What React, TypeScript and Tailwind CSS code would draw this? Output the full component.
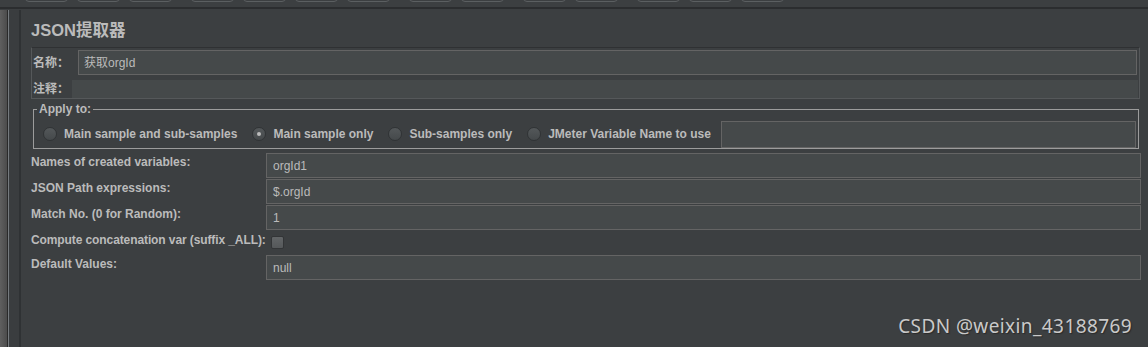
const font = "font-['Liberation_Sans','Noto_Sans_CJK_SC',sans-serif]";

const toolbarGroups = [3, 4, 2, 2, 3];

function Radio({ label, checked }: { label: string; checked?: boolean }) {
  return (
    <div className="flex items-center gap-[7px]">
      <div className="w-[14px] h-[14px] rounded-full border border-[#303335] bg-gradient-to-b from-[#54585a] to-[#45494b] flex items-center justify-center">
        {checked && <div className="w-[4px] h-[4px] rounded-full bg-[#bcbcbc]" />}
      </div>
      <span className="font-bold text-[12px] leading-[14px] whitespace-nowrap">{label}</span>
    </div>
  );
}

function Field({ value }: { value?: string }) {
  return (
    <div className="h-[25px] border border-[#646464] bg-[#45494a] flex items-center pl-[6px] text-[12px] text-[#bbbbbb]">
      {value}
    </div>
  );
}

export default function App() {
  const rows: { label: string; value?: string; check?: boolean }[] = [
    { label: "Names of created variables:", value: "orgId1" },
    { label: "JSON Path expressions:", value: "$.orgId" },
    { label: "Match No. (0 for Random):", value: "1" },
    { label: "Compute concatenation var (suffix _ALL):", check: true },
    { label: "Default Values:", value: "null" },
  ];

  return (
    <div className={`${font} relative w-[1148px] h-[347px] overflow-hidden bg-[#3c3f41] text-[#bbbbbb] flex flex-col`}>
      {/* toolbar (only button bottoms visible) */}
      <div className="h-[7px] overflow-hidden flex items-start pl-[25px] gap-[19px]">
        {toolbarGroups.map((n, gi) => (
          <div key={gi} className="flex gap-[9px]">
            {Array.from({ length: n }).map((_, i) => (
              <div key={i} className="w-[43px] h-[12px] -mt-[10px] rounded-[4px] border border-[#5b5f61]" />
            ))}
          </div>
        ))}
      </div>
      <div className="h-[2px] bg-[#2b2d2f]" />

      <div className="flex flex-1">
        {/* left strip */}
        <div className="flex w-[21px] pt-[1px]">
          <div className="w-[7px] bg-gradient-to-r from-[#5f5f5f] to-[#4c4c4c]" />
          <div className="w-[1px] bg-[#2a2a2a]" />
          <div className="w-[1px] bg-[#767b7f]" />
          <div className="w-[10px] bg-[#3a3d3f]" />
          <div className="w-[2px] bg-[#2f3234]" />
        </div>

        {/* main panel */}
        <div className="flex-1 flex flex-col">
          <div className="mt-[11px] ml-[10px] h-[20px] leading-[20px] text-[16.5px] font-bold">JSON提取器</div>

          {/* name / comment */}
          <div className="mt-[7px] ml-[10px] mr-[8px] border border-[#55585a] border-t-[#2f3133] pt-[2px] pr-[2px] pb-0">
            <div className="flex items-center h-[25px]">
              <span className="w-[46px] pl-[1px] text-[12px] font-bold">名称：</span>
              <div className="flex-1 h-[25px] border border-[#646464] bg-[#45494a] flex items-center pl-[5px] text-[12px]">
                获取orgId
              </div>
            </div>
            <div className="flex items-center h-[18px] mt-[5px]">
              <span className="w-[40px] pl-[1px] text-[12px] font-bold">注释：</span>
              <div className="flex-1 h-[18px] bg-[#45494a] -mr-[1px]" />
            </div>
          </div>

          {/* apply to */}
          <fieldset className="mt-[3px] ml-[12px] mr-[9px] border border-[#9c9c9c] pl-[3px] pr-[2px] pt-[4px] pb-0">
            <legend className="px-[2px] text-[12px] leading-[14px] font-bold">Apply to:</legend>
            <div className="flex items-center h-[28px] pl-[6px] gap-[15px]">
              <Radio label="Main sample and sub-samples" />
              <Radio label="Main sample only" checked />
              <Radio label="Sub-samples only" />
              <Radio label="JMeter Variable Name to use" />
              <div className="flex-1 h-[27px] -ml-[5px] border border-[#646464] bg-[#45494a]" />
            </div>
          </fieldset>

          {/* property rows */}
          <div className="mt-[4px] ml-[10px] mr-[7px] grid grid-cols-[235px_1fr] gap-y-[1px]">
            {rows.map((r) => (
              <div key={r.label} className="contents">
                <div
                  className={`${r.check ? "h-[23px] tracking-[-0.1px]" : "h-[25px]"} pt-[2px] text-[12px] leading-[14px] font-bold whitespace-nowrap`}
                >
                  {r.label}
                </div>
                {r.check ? (
                  <div className="h-[23px]">
                    <div className="ml-[5px] mt-[5px] w-[13px] h-[13px] rounded-[2px] border border-[#333537] bg-gradient-to-b from-[#626567] to-[#55585a]" />
                  </div>
                ) : (
                  <Field value={r.value} />
                )}
              </div>
            ))}
          </div>
        </div>
      </div>

      {/* watermark */}
      <div className="absolute right-[16px] top-[313px] font-['Noto_Sans',sans-serif] text-[19px] leading-[26px] tracking-[0.4px] text-[#c9c9c9] [text-shadow:1px_1px_1px_#2a2a2a]">
        CSDN @weixin_43188769
      </div>
    </div>
  );
}
